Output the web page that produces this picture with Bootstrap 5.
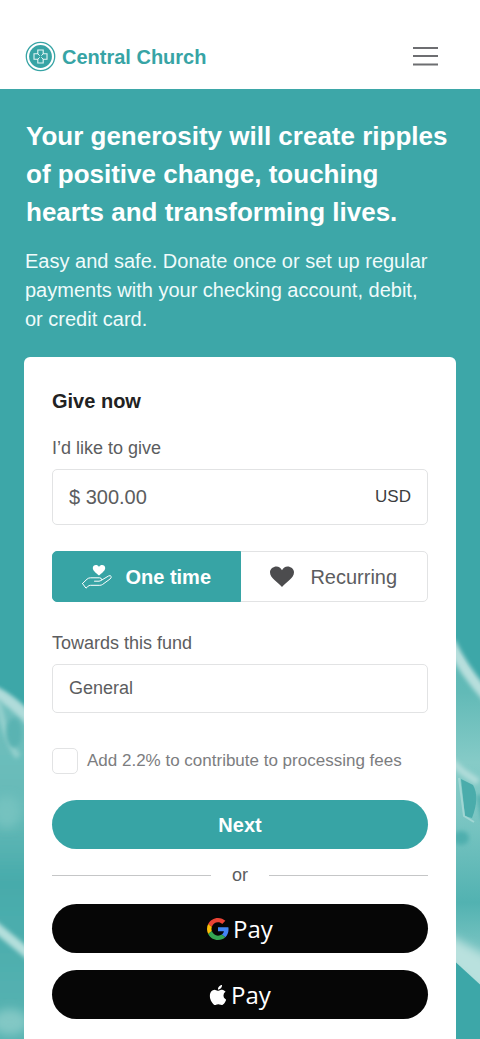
<!DOCTYPE html>
<html lang="en">
<head>
<meta charset="utf-8">
<meta name="viewport" content="width=device-width, initial-scale=1">
<title>Central Church – Give</title>
<link href="https://cdn.jsdelivr.net/npm/bootstrap@5.3.0/dist/css/bootstrap.min.css" rel="stylesheet">
<style>
  :root { --teal: #37a4a5; --line: #e2e3e4; --ink: #5c5d60; }
  body { font-family: "Liberation Sans", Arial, sans-serif; font-size: 18px; line-height: 24px; color: var(--ink); background: #fff; }
  .site-header { padding: 41px 36px 17px 25px; }
  .brand { color: var(--teal); font-size: 20px; line-height: 24px; font-weight: 700; gap: 6px; }
  .menu-btn { width: 37px; height: 30px; border: 0; border-radius: 4px; }
  .hero { background: #3da7a8; overflow: hidden; }
  .hero-art { inset: 0; z-index: 0; }
  .hero-body { z-index: 1; padding: 28px 24px 0; }
  .hero-title { font-size: 26px; line-height: 38px; font-weight: 700; margin-bottom: 16px; padding: 0 2px; }
  .hero-lead { font-size: 20px; line-height: 29px; margin-bottom: 23px; padding: 0 16px 0 1px; color: #f0fbfb; }
  .give-card { border: 0; border-radius: 6px 6px 0 0; padding: 32px 28px 20px; color: var(--ink); }
  .give-title { font-size: 20px; line-height: 24px; color: #222; font-weight: 700; margin-bottom: 23px; }
  .field-label { margin-bottom: 9px; line-height: 24px; }
  .field { border: 1px solid var(--line); border-radius: 5px; color: var(--ink); padding: 0 16px; background-image: none; }
  .field-amount, .field-amount .form-control { font-size: 20px; color: var(--ink); }
  .field-amount { height: 56px; margin-bottom: 26px; }
  .currency { font-size: 17px; color: #3c3d40; }
  .field-fund { height: 49px; font-size: 18px; margin-bottom: 35px; }
  .freq { height: 51px; margin-bottom: 29px; }
  .freq .btn { --bs-btn-color: var(--ink); --bs-btn-border-color: var(--line); --bs-btn-active-bg: var(--teal); --bs-btn-active-border-color: var(--teal); --bs-btn-active-color: #fff; --bs-btn-border-radius: 5px; font-size: 20px; line-height: 24px; flex: 1 1 0; padding: 0; }
  .fee-row { gap: 9px; margin-bottom: 26px; color: #7c7d80; font-size: 17px; }
  .fee-row .form-check-input { width: 26px; height: 26px; border: 1px solid var(--line); border-radius: 5px; }
  .pill { height: 49px; border: 0; border-radius: 25px; padding: 0; }
  .pill-next { background: var(--teal); color: #fff; font-size: 20px; font-weight: 700; }
  .pill-next:hover { background: #2b9091; color: #fff; }
  .pill-pay, .pill-pay:hover { background: #060606; color: #fff; font-family: "Open Sans", sans-serif; font-size: 24px; line-height: 30px; font-weight: 500; }
  .pay-list { gap: 17px; }
  .divider { gap: 21px; margin: 14px 0 17px; font-size: 18px; }
  .divider hr { color: #c5c6c7; opacity: 1; margin: 0; }
</style>
</head>
<body class="d-flex flex-column min-vh-100">

<header class="site-header d-flex align-items-center justify-content-between">
  <a href="#" class="brand d-flex align-items-center text-decoration-none">
    <svg width="31" height="31" viewBox="0 0 31 31" fill="none" aria-hidden="true">
      <circle cx="15.500" cy="15.500" r="14.200" stroke="#37a4a5" stroke-width="1.300"/>
      <circle cx="15.500" cy="15.500" r="11.400" fill="#37a4a5"/>
      <path d="M12.800 9h5.400v3.800h3.800v5.400h-3.800V22h-5.400v-3.800H9v-5.400h3.800z" stroke="#e4f5f5" stroke-width="1.100"/>
      <path d="M12.800 12.800l5.400 5.400M18.200 12.800l-5.400 5.400" stroke="#e4f5f5" stroke-width="1"/>
      <circle cx="15.500" cy="15.500" r="1.300" fill="#37a4a5"/>
    </svg>
    <span>Central Church</span>
  </a>
  <button type="button" class="menu-btn btn p-0 d-flex align-items-center justify-content-center" aria-label="Menu">
    <svg width="25" height="20" viewBox="0 0 25 20" stroke="#6d6e71" stroke-width="2"><path d="M0 1h25M0 9h25M0 17.500h25"/></svg>
  </button>
</header>

<main class="hero position-relative flex-grow-1">
  <svg class="hero-art position-absolute w-100 h-100" viewBox="0 89 480 950" preserveAspectRatio="xMidYMin slice" aria-hidden="true">
    <defs>
      <linearGradient id="palm" gradientUnits="userSpaceOnUse" x1="0" y1="640" x2="0" y2="990">
        <stop offset="0" stop-color="#5cb8b6"/><stop offset=".15" stop-color="#62bab7"/><stop offset=".35" stop-color="#86cbc7"/><stop offset=".5" stop-color="#7cc6c3"/><stop offset=".75" stop-color="#52b2b1"/><stop offset="1" stop-color="#9ad3d0"/>
      </linearGradient>
      <linearGradient id="arm" gradientUnits="userSpaceOnUse" x1="0" y1="690" x2="0" y2="1039">
        <stop offset="0" stop-color="#72c0be"/><stop offset=".35" stop-color="#66bab8"/><stop offset=".55" stop-color="#47abab"/><stop offset="1" stop-color="#58b3b2"/>
      </linearGradient>
      <filter id="soft" filterUnits="userSpaceOnUse" x="-40" y="600" width="560" height="480"><feGaussianBlur stdDeviation="2"/></filter>
      <filter id="softer" filterUnits="userSpaceOnUse" x="-40" y="600" width="560" height="480"><feGaussianBlur stdDeviation="5"/></filter>
    </defs>
    <path d="M-20 680Q8 690 40 722V1060H-20z" fill="url(#arm)" filter="url(#soft)"/>
    <path d="M-10 690Q10 698 32 722" stroke="#b0dcda" stroke-width="11" fill="none" filter="url(#soft)"/>
    <path d="M-2 700Q5 738 18 757" stroke="#94d0cd" stroke-width="6" fill="none" filter="url(#soft)"/>
    <ellipse cx="14" cy="733" rx="8" ry="15" fill="#5ab3b2" filter="url(#soft)"/>
    <ellipse cx="7" cy="812" rx="14" ry="16" fill="#75c2bf" filter="url(#softer)"/>
    <path d="M-8 924L32 957" stroke="#b4dfdc" stroke-width="10" filter="url(#soft)"/>
    <ellipse cx="10" cy="1022" rx="18" ry="13" fill="#82c8c5" filter="url(#softer)"/>
    <path d="M448 634L496 712V1000L448 958z" fill="url(#palm)"/>
    <path d="M450 642Q464 672 490 700" stroke="#b8dfdd" stroke-width="11" fill="none" filter="url(#soft)"/>
    <path d="M450 760L463 772L478 782" stroke="#b0dcd9" stroke-width="7" fill="none" filter="url(#soft)"/>
    <path d="M461 779L473 785Q480 797 472 818L465 816Z" fill="#4aacab"/>
    <path d="M459 778L464 816L474 822" stroke="#a0d6d3" stroke-width="2" fill="none"/>
    <path d="M479 795L484 820" stroke="#4fafae" stroke-width="5" filter="url(#soft)"/>
    <ellipse cx="461" cy="838" rx="8" ry="7" fill="#4fafae" filter="url(#soft)"/>
    <path d="M444 932L490 958V1000L444 960z" fill="#b9e1de" filter="url(#softer)"/>
    <path d="M450 957L486 990V1060H450z" fill="#3da7a8"/>
  </svg>

  <div class="hero-body position-relative">
    <h1 class="hero-title text-white">Your generosity will create ripples of positive change, touching hearts and transforming lives.</h1>
    <p class="hero-lead">Easy and safe. Donate once or set up regular payments with your checking account, debit, or credit card.</p>

    <form class="give-card card">
      <h2 class="give-title">Give now</h2>

      <label class="field-label" for="amount">I’d like to give</label>
      <div class="field field-amount d-flex align-items-center">
        <input id="amount" class="form-control border-0 p-0 bg-transparent shadow-none" type="text" inputmode="decimal" value="$ 300.00">
        <span class="currency">USD</span>
      </div>

      <div class="freq btn-group" role="group" aria-label="Frequency">
        <input type="radio" class="btn-check" name="freq" id="once" checked>
        <label class="btn d-flex align-items-center justify-content-center gap-2 fw-bold" for="once">
          <svg class="me-1" width="32" height="26" viewBox="0 0 32 26" fill="none" aria-hidden="true">
            <path d="M18 11.500C15.500 9 11.800 7 11.800 3.900 11.800.5 16.600 0 18 3 19.400 0 24.200.5 24.200 3.900 24.200 7 20.500 9 18 11.500z" fill="#fff"/>
            <path d="M1.500 19.500L6 15.200Q7.500 13.800 9.500 13.800H18.500Q20.800 14 20.500 15.600 20.300 17 18 17.200H13.500M20.500 16.200L27.500 12Q29.500 11 30.200 12.500 30.500 13.700 29 15L21.500 20.500Q20.300 21.300 18.800 21.300H9.500Q8 21.300 6.800 22.500L5 24.200L1.500 19.500" stroke="#fff" stroke-width="1" stroke-linecap="round" stroke-linejoin="round"/>
          </svg>
          <span>One time</span>
        </label>
        <input type="radio" class="btn-check" name="freq" id="recurring">
        <label class="btn d-flex align-items-center justify-content-center gap-3" for="recurring">
          <svg width="24" height="21" viewBox="0 0 24 21" aria-hidden="true"><path d="M12 21C8 16 0 12.500 0 6.300 0 .3 9.500-2.300 12 4.300 14.500-2.300 24 .3 24 6.300 24 12.500 16 16 12 21z" fill="#4c4c4e"/></svg>
          <span>Recurring</span>
        </label>
      </div>

      <label class="field-label" for="fund">Towards this fund</label>
      <select id="fund" class="form-select field field-fund"><option>General</option></select>

      <div class="fee-row d-flex align-items-center">
        <input class="form-check-input m-0 flex-shrink-0" type="checkbox" id="fees">
        <label for="fees">Add 2.2% to contribute to processing fees</label>
      </div>

      <button type="button" class="btn pill pill-next w-100">Next</button>

      <div class="divider d-flex align-items-center"><hr class="flex-fill"><span>or</span><hr class="flex-fill"></div>

      <div class="pay-list d-grid">
        <button type="button" class="btn pill pill-pay d-flex align-items-center justify-content-center gap-1" aria-label="Google Pay">
          <svg width="22" height="22" viewBox="0 0 48 48" aria-hidden="true">
            <path fill="#EA4335" d="M24 9.500c3.540 0 6.710 1.220 9.210 3.600l6.850-6.850C35.900 2.380 30.470 0 24 0 14.620 0 6.510 5.380 2.560 13.220l7.980 6.190C12.430 13.720 17.740 9.500 24 9.500z"/>
            <path fill="#4285F4" d="M46.980 24.550c0-1.570-.15-3.090-.38-4.550H24v9.020h12.940c-.58 2.960-2.260 5.480-4.780 7.180l7.730 6c4.510-4.180 7.090-10.360 7.090-17.650z"/>
            <path fill="#FBBC05" d="M10.530 28.590c-.48-1.450-.76-2.990-.76-4.590s.27-3.140.76-4.590l-7.980-6.190C.92 16.460 0 20.120 0 24c0 3.880.92 7.540 2.560 10.780l7.970-6.190z"/>
            <path fill="#34A853" d="M24 48c6.480 0 11.930-2.130 15.890-5.810l-7.730-6c-2.150 1.450-4.920 2.300-8.160 2.300-6.260 0-11.570-4.220-13.470-9.910l-7.980 6.190C6.510 42.620 14.620 48 24 48z"/>
          </svg>
          <span>Pay</span>
        </button>
        <button type="button" class="btn pill pill-pay d-flex align-items-center justify-content-center gap-1" aria-label="Apple Pay">
          <svg width="18" height="20" viewBox="1 0 14 16" fill="#fff" aria-hidden="true">
            <path d="M11.182.008C11.148-.03 9.923.023 8.857 1.180c-1.066 1.156-.902 2.482-.878 2.516.024.034 1.520.087 2.475-1.258.955-1.345.762-2.391.728-2.430zm3.314 11.733c-.048-.096-2.325-1.234-2.113-3.422.212-2.189 1.675-2.789 1.698-2.854.023-.065-.597-.790-1.254-1.157a3.692 3.692 0 0 0-1.563-.434c-.108-.003-.483-.095-1.254.116-.508.139-1.653.589-1.968.607-.316.018-1.256-.522-2.267-.665-.647-.125-1.333.131-1.824.328-.490.196-1.422.754-2.074 2.237-.652 1.482-.311 3.830-.067 4.560.244.729.625 1.924 1.273 2.796.576.984 1.340 1.667 1.659 1.899.319.232 1.219.386 1.843.067.502-.308 1.408-.485 1.766-.472.357.013 1.061.154 1.782.539.571.197 1.111.115 1.652-.105.541-.221 1.324-1.059 2.238-2.758.347-.790.505-1.217.473-1.282z"/>
          </svg>
          <span>Pay</span>
        </button>
      </div>
    </form>
  </div>
</main>

<script src="https://cdn.jsdelivr.net/npm/bootstrap@5.3.0/dist/js/bootstrap.bundle.min.js"></script>
</body>
</html>
